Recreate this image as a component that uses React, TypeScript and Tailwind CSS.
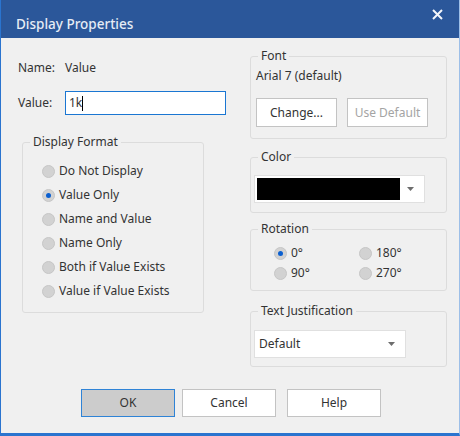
import React from 'react';

const FONT = "font-['Noto_Sans','Liberation_Sans',sans-serif]";

const Radio = ({ checked = false }: { checked?: boolean }) => (
  <span className="w-[13px] h-[13px] rounded-full bg-[#d2d2d2] border border-[#c6c6c6] flex items-center justify-center shrink-0">
    {checked && <span className="w-[5px] h-[5px] rounded-full bg-[#0a5fd0]" />}
  </span>
);

const RadioRow = ({ label, checked = false, className = '' }: { label: string; checked?: boolean; className?: string }) => (
  <div className={`flex items-center gap-[4px] ${className}`}>
    <Radio checked={checked} />
    <span>{label}</span>
  </div>
);

const Arrow = () => (
  <svg width="7" height="4" viewBox="0 0 7 4" className="shrink-0">
    <path d="M0 0 L7 0 L3.5 4 Z" fill="#6d6d6d" />
  </svg>
);

const Group = ({ title, className = '', inner = '', children }: { title: string; className?: string; inner?: string; children: React.ReactNode }) => (
  <fieldset className={`border border-[#dcdcdc] rounded-[3px] ${className}`}>
    <legend className="ml-[7px] px-[3px] leading-[16px]">{title}</legend>
    <div className={inner}>{children}</div>
  </fieldset>
);

const FORMATS = ['Do Not Display', 'Value Only', 'Name and Value', 'Name Only', 'Both if Value Exists', 'Value if Value Exists'];

export default function App() {
  return (
    <div className={`w-[460px] h-[436px] bg-[#f0f0f0] flex flex-col border-l border-l-[#2a74cf] border-r border-r-[#9dbfe8] border-b-[3px] border-b-[#2a74cf] text-[12px] leading-[16px] text-[#333333] ${FONT}`}>
      {/* title bar */}
      <div className="h-[38px] bg-[#2b579a] flex items-center justify-between pl-[15px] pr-[16px] shrink-0">
        <span className="text-[13.5px] font-medium text-[#e6ecf5] mt-[10px]">Display Properties</span>
        <svg width="11" height="11" viewBox="0 0 11 11" className="mb-[10px]">
          <path d="M1 1 L10 10 M10 1 L1 10" stroke="#f4f6fa" strokeWidth="2" />
        </svg>
      </div>

      <div className="flex pl-[17px]">
        {/* left column */}
        <div className="w-[208px] pt-[22px] flex flex-col">
          <div className="flex h-[16px]">
            <span className="w-[47px]">Name:</span>
            <span>Value</span>
          </div>
          <div className="flex items-center mt-[15px]">
            <span className="w-[47px]">Value:</span>
            <div className="w-[161px] h-[24px] bg-white border border-[#1a76d2] flex items-center pl-[3px]">
              <span>1k</span>
              <span className="w-[1px] h-[15px] bg-black" />
            </div>
          </div>
          <Group title="Display Format" className="mt-[19px] ml-[4px] w-[182px] h-[179px]" inner="pl-[19px] pt-[9px]">
            {FORMATS.map((f, i) => (
              <RadioRow key={f} label={f} checked={i === 1} className="h-[24px]" />
            ))}
          </Group>
        </div>

        {/* right column */}
        <div className="ml-[24px] w-[197px] pt-[10px] flex flex-col">
          <Group title="Font" className="h-[91px]" inner="px-[5px]">
            <div className="mt-[4px]">Arial 7 (default)</div>
            <div className="flex gap-[10px] mt-[14px]">
              <button className="w-[81px] h-[29px] bg-white border border-[#c3c3c3]">Change...</button>
              <button className="w-[81px] h-[29px] bg-white border border-[#c3c3c3] text-[#a4a4a4]">Use Default</button>
            </div>
          </Group>
          <Group title="Color" className="mt-[10px] h-[64px]" inner="px-[3px]">
            <div className="mt-[10px] w-[171px] h-[28px] bg-white border border-[#e0e0e0] flex items-center pl-[2px] pr-[10px]">
              <div className="w-[143px] h-[22px] bg-black" />
              <div className="flex-1" />
              <Arrow />
            </div>
          </Group>
          <Group title="Rotation" className="mt-[8px] h-[70px]" inner="pl-[23px]">
            <div className="grid grid-cols-[85px_1fr] mt-[6px]">
              <RadioRow label="0°" checked className="h-[20px]" />
              <RadioRow label="180°" className="h-[20px]" />
              <RadioRow label="90°" className="h-[20px]" />
              <RadioRow label="270°" className="h-[20px]" />
            </div>
          </Group>
          <Group title="Text Justification" className="mt-[12px] h-[64px]" inner="px-[3px]">
            <div className="mt-[11px] w-[152px] h-[28px] bg-white border border-[#e0e0e0] flex items-center pl-[4px] pr-[10px]">
              <span>Default</span>
              <div className="flex-1" />
              <Arrow />
            </div>
          </Group>
        </div>
      </div>

      {/* buttons */}
      <div className="flex pl-[80px] mt-[22px]">
        <button className="w-[94px] h-[28px] bg-[#cccccc] border border-[#2f83d6]">OK</button>
        <button className="ml-[7px] w-[94px] h-[28px] bg-white border border-[#c3c3c3]">Cancel</button>
        <button className="ml-[11px] w-[94px] h-[28px] bg-white border border-[#c3c3c3]">Help</button>
      </div>
    </div>
  );
}
